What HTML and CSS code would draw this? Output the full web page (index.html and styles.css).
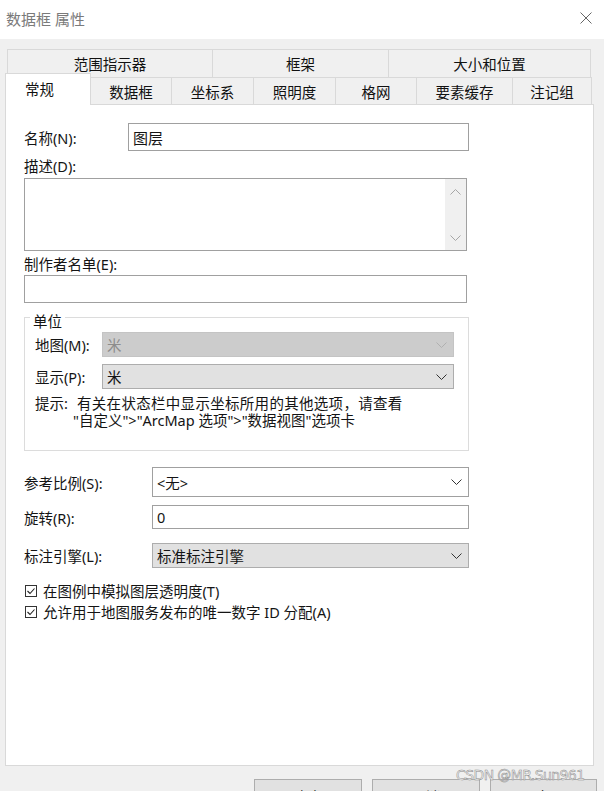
FILE: index.html
```html
<!DOCTYPE html>
<html lang="zh-CN">
<head>
<meta charset="utf-8">
<title>数据框 属性</title>
<link rel="stylesheet" href="styles.css">
</head>
<body>
<div class="titlebar">
  <span class="title">数据框 属性</span>
  <svg class="close" width="12" height="12" viewBox="0 0 12 12"><path d="M0.5 0.5 L11.5 11.5 M11.5 0.5 L0.5 11.5" stroke="#666" stroke-width="1" fill="none"/></svg>
</div>
<div class="body">
  <div class="tabs">
    <div class="tabrow-top">
      <div class="tab">范围指示器</div>
      <div class="tab">框架</div>
      <div class="tab last">大小和位置</div>
    </div>
    <div class="tabrow-bottom">
      <div class="tab active">常规</div>
      <div class="tab after-active">数据框</div>
      <div class="tab">坐标系</div>
      <div class="tab">照明度</div>
      <div class="tab">格网</div>
      <div class="tab">要素缓存</div>
      <div class="tab last">注记组</div>
    </div>
  </div>
  <div class="panel">
    <div class="row name-row">
      <span class="lbl lbl-name">名称(N):</span>
      <div class="field name-input">图层</div>
    </div>
    <div class="block-label desc-label">描述(D):</div>
    <div class="textarea">
      <div class="scroll">
        <svg width="11" height="6" viewBox="0 0 11 6"><path d="M0.5 5.5 L5.5 0.5 L10.5 5.5" fill="none" stroke="#a6a6a6" stroke-width="1"/></svg>
        <svg width="11" height="6" viewBox="0 0 11 6"><path d="M0.5 0.5 L5.5 5.5 L10.5 0.5" fill="none" stroke="#a6a6a6" stroke-width="1"/></svg>
      </div>
    </div>
    <div class="block-label credits-label">制作者名单(E):</div>
    <div class="field credits-input"></div>

    <div class="group">
      <div class="legend">单位</div>
      <div class="row unit-row map-row">
        <span class="lbl lbl-unit">地图(M):</span>
        <div class="select unit-select disabled"><span>米</span>
          <svg width="11" height="6" viewBox="0 0 11 6"><path d="M0.5 0.5 L5.5 5.5 L10.5 0.5" fill="none" stroke="#b0b0b0" stroke-width="1"/></svg>
        </div>
      </div>
      <div class="row unit-row show-row">
        <span class="lbl lbl-unit">显示(P):</span>
        <div class="select unit-select combo"><span>米</span>
          <svg width="11" height="6" viewBox="0 0 11 6"><path d="M0.5 0.5 L5.5 5.5 L10.5 0.5" fill="none" stroke="#333" stroke-width="1"/></svg>
        </div>
      </div>
      <div class="hint">
        <span class="hint-key">提示:</span>
        <div class="hint-text"><div class="hint-l1">有关在状态栏中显示坐标所用的其他选项，请查看</div><div>"自定义"&gt;"ArcMap 选项"&gt;"数据视图"选项卡</div></div>
      </div>
    </div>

    <div class="row scale-row">
      <span class="lbl lbl-wide">参考比例(S):</span>
      <div class="select wide-select plain"><span>&lt;无&gt;</span>
        <svg width="11" height="6" viewBox="0 0 11 6"><path d="M0.5 0.5 L5.5 5.5 L10.5 0.5" fill="none" stroke="#333" stroke-width="1"/></svg>
      </div>
    </div>
    <div class="row rot-row">
      <span class="lbl lbl-wide">旋转(R):</span>
      <div class="field wide-select rot-input">0</div>
    </div>
    <div class="row engine-row">
      <span class="lbl lbl-wide">标注引擎(L):</span>
      <div class="select wide-select combo"><span>标准标注引擎</span>
        <svg width="11" height="6" viewBox="0 0 11 6"><path d="M0.5 0.5 L5.5 5.5 L10.5 0.5" fill="none" stroke="#333" stroke-width="1"/></svg>
      </div>
    </div>
    <div class="check first-check">
      <svg class="cb" width="12" height="12" viewBox="0 0 12 12"><rect x="0.5" y="0.5" width="11" height="11" fill="#fff" stroke="#333"/><path d="M2.5 6 L5 8.5 L9.5 3.5" fill="none" stroke="#222" stroke-width="1.1"/></svg>
      <span>在图例中模拟图层透明度(T)</span>
    </div>
    <div class="check">
      <svg class="cb" width="12" height="12" viewBox="0 0 12 12"><rect x="0.5" y="0.5" width="11" height="11" fill="#fff" stroke="#333"/><path d="M2.5 6 L5 8.5 L9.5 3.5" fill="none" stroke="#222" stroke-width="1.1"/></svg>
      <span>允许用于地图服务发布的唯一数字 ID 分配(A)</span>
    </div>
  </div>
  <div class="buttons">
    <div class="btn btn-ok">确定</div>
    <div class="btn btn-cancel">取消</div>
    <div class="btn btn-apply">应用(A)</div>
  </div>
</div>
<div class="watermark">CSDN @MR.Sun961</div>
</body>
</html>
```

FILE: styles.css
```css
html, body {
  margin: 0;
  padding: 0;
}
body {
  width: 604px;
  height: 791px;
  overflow: hidden;
  position: relative;
  background: #f0f0f0;
  font-family: "Noto Sans", "Noto Sans CJK SC", sans-serif;
  font-size: 14.5px;
  color: #141414;
}
.titlebar {
  height: 39px;
  background: #fff;
  display: flex;
  align-items: center;
  justify-content: space-between;
  padding: 0 12px 3px 6px;
  box-sizing: border-box;
}
.title {
  font-size: 15px;
  color: #7a7a7a;
}
.body {
  padding: 10px 0 0 5px;
}
.tabs {
  width: 589px;
}
.tab {
  box-sizing: border-box;
  border-top: 1px solid #d9d9d9;
  border-left: 1px solid #d9d9d9;
  display: flex;
  align-items: center;
  justify-content: center;
  color: #111;
  white-space: nowrap;
}
.tab.last {
  border-right: 1px solid #d9d9d9;
}
.tabrow-top {
  display: grid;
  grid-template-columns: 205px 176px 203px;
  margin-left: 2px;
  height: 28px;
}
.tabrow-bottom {
  display: grid;
  grid-template-columns: 86px 80px 82px 82px 81px 96px 80px;
  height: 31px;
  margin-top: -4px;
  align-items: end;
}
.tabrow-bottom .tab {
  height: 27px;
}
.tabrow-bottom .tab.active {
  height: 32px;
  margin-bottom: -1px;
  background: #fff;
  border-right: 1px solid #d9d9d9;
  position: relative;
  z-index: 1;
  justify-content: flex-start;
  padding-left: 19px;
  padding-bottom: 2px;
}
.tab.after-active {
  border-left: none;
}
.panel {
  width: 589px;
  height: 662px;
  box-sizing: border-box;
  background: #fff;
  border: 1px solid #d9d9d9;
  padding: 18px 0 0 18px;
}
.row {
  display: flex;
  align-items: center;
}
.lbl {
  white-space: nowrap;
}
.name-row {
  height: 28px;
}
.lbl-name {
  width: 104px;
}
.field {
  box-sizing: border-box;
  border: 1px solid #a0a0a0;
  background: #fff;
  display: flex;
  align-items: center;
  padding-left: 4px;
}
.name-input {
  width: 341px;
  height: 28px;
  font-size: 15px;
}
.block-label {
  height: 22px;
  line-height: 22px;
}
.desc-label {
  margin-top: 4px;
  margin-bottom: 1px;
}
.textarea {
  width: 443px;
  height: 73px;
  box-sizing: border-box;
  border: 1px solid #a0a0a0;
  display: flex;
  justify-content: flex-end;
}
.scroll {
  width: 21px;
  background: #f0f0f0;
  display: flex;
  flex-direction: column;
  justify-content: space-between;
  align-items: center;
  padding: 10px 0 9px;
  box-sizing: border-box;
}
.credits-label {
  margin-top: 2px;
}
.credits-input {
  width: 443px;
  height: 28px;
}
.group {
  width: 445px;
  height: 134px;
  box-sizing: border-box;
  border: 1px solid #dcdcdc;
  margin-top: 14px;
  padding: 0 0 0 10px;
}
.legend {
  width: fit-content;
  margin: -6px 0 0 -5px;
  padding: 0 3px;
  background: #fff;
  height: 18px;
  line-height: 18px;
}
.unit-row {
  height: 25px;
}
.map-row {
  margin-top: 2px;
}
.show-row {
  margin-top: 7px;
}
.lbl-unit {
  width: 67px;
}
.select {
  box-sizing: border-box;
  border: 1px solid #adadad;
  display: flex;
  align-items: center;
  justify-content: space-between;
  padding: 0 6px 0 4px;
  height: 100%;
}
.unit-select {
  width: 352px;
}
.disabled {
  background: #cccccc;
  border-color: #c4c4c4;
  color: #8c8c8c;
}
.combo {
  background: #e1e1e1;
  border-color: #adadad;
}
.plain {
  background: #fff;
  border-color: #a0a0a0;
}
.hint {
  display: flex;
  margin-top: 6px;
  font-size: 14.5px;
  line-height: 17px;
}
.hint-key {
  width: 38px;
  flex: none;
}
.hint-l1 {
  text-indent: 4px;
  letter-spacing: 0.3px;
}
.lbl-wide {
  width: 128px;
}
.wide-select {
  width: 317px;
}
.scale-row {
  height: 30px;
  margin-top: 16px;
}
.rot-row {
  height: 24px;
  margin-top: 8px;
}
.rot-input {
  height: 24px;
}
.engine-row {
  height: 25px;
  margin-top: 14px;
}
.check {
  display: flex;
  align-items: center;
  height: 21px;
}
.first-check {
  margin-top: 12px;
}
.cb {
  margin: 0 6px 0 1px;
  flex: none;
}
.buttons {
  display: flex;
  justify-content: flex-end;
  gap: 10px;
  padding-right: 7px;
  margin-top: 13px;
}
.btn {
  box-sizing: border-box;
  height: 30px;
  background: #e1e1e1;
  border: 1px solid #adadad;
  text-align: center;
  padding-top: 6px;
  font-size: 14.5px;
}
.btn-ok, .btn-cancel {
  width: 108px;
}
.btn-apply {
  width: 107px;
  padding-left: 30px;
}
.watermark {
  position: absolute;
  left: 456px;
  top: 767px;
  font-family: "DejaVu Sans", sans-serif;
  font-size: 14px;
  letter-spacing: -0.6px;
  color: #f6f6f6;
  -webkit-text-stroke: 0.5px #8a8a8a;
}
```
